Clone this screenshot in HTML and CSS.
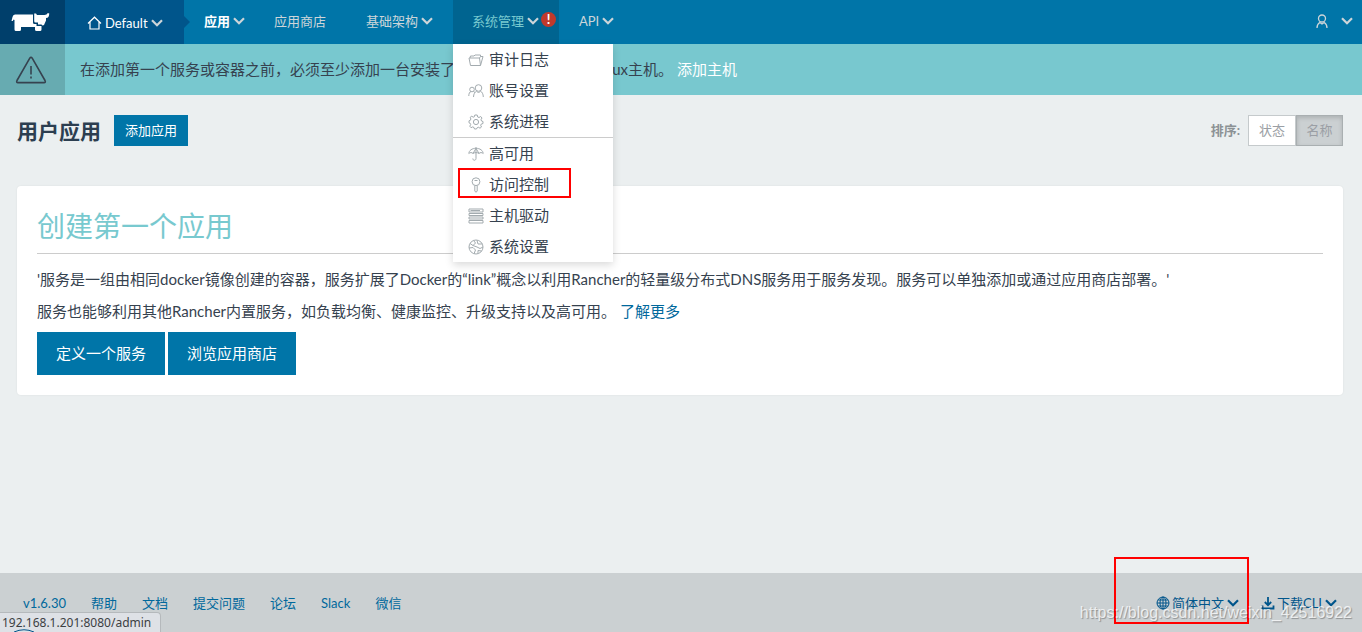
FILE: index.html
```html
<!DOCTYPE html>
<html lang="zh-CN">
<head>
<meta charset="utf-8">
<title>用户应用</title>
<link rel="stylesheet" href="styles.css">
</head>
<body>
<svg class="defs" aria-hidden="true">
  <symbol id="chevron" viewBox="0 0 12 8"><path d="M1 1.200 6 6.200 11 1.200" fill="none" stroke="currentColor" stroke-width="2.200"/></symbol>
</svg>
<header class="topbar">
  <a class="logo" href="#" aria-label="Rancher">
    <svg width="39" height="20" viewBox="0 0 39 20" fill="currentColor"><path d="M4 2.500H22V10.500Q22 12 23.500 12H25.500V14H30.500V17.500Q30.500 19 29 19H25.500Q24 19 24 17.500V15H10V17.500Q10 19 8.500 19H5Q3.500 19 3.500 17.500V8L2.500 7.500 1.800 9H.5L1.500 5Q2 2.500 4 2.500Z"/><path d="M23.200 1.500H25L26 3H33.500Q36 3 36.500 1.200H38.200Q38.500 6 35 6V8.500L33 13Q31.500 14 30.500 12.500H27V10.500H24.500Q23.200 10.500 23.200 9Z"/></svg>
  </a>
  <button class="env" type="button">
    <svg width="15" height="14" viewBox="0 0 15 14" fill="none" stroke="currentColor" stroke-width="1.200"><path d="M1 7.500 7.500 1.200 14 7.500M3 6V13H12V6"/></svg>
    <span>Default</span><svg class="chev"><use href="#chevron"/></svg>
  </button>
  <nav class="nav">
    <a class="item current" href="#">应用<svg class="chev"><use href="#chevron"/></svg></a>
    <a class="item store" href="#">应用商店</a>
    <a class="item infra" href="#">基础架构<svg class="chev"><use href="#chevron"/></svg></a>
    <div class="admin">
      <a class="item open" href="#">系统管理<svg class="chev"><use href="#chevron"/></svg><span class="alert">!</span></a>
      <ul class="menu">
        <li><a href="#"><svg class="mi" viewBox="0 0 16 16"><path d="M2.500 13.500H12.500L15 4.500H12.500L11.500 6M2.500 13.500 1 6H11.500L12.500 13.500M2 6 2.500 4H6L7 3H12.500V4.500"/></svg>审计日志</a></li>
        <li><a href="#"><svg class="mi" viewBox="0 0 16 16"><circle cx="10.500" cy="5" r="3.300"/><circle cx="4" cy="6.500" r="2.300"/><path d="M5.500 14C5.500 11 7 9 8.500 8M12.500 8C14 9 15.300 11 15.300 14M.8 13C.8 10.500 1.500 9 3 8.500M5.500 8.500 7 9.500M8.500 8 10.500 10 12.500 8"/></svg>账号设置</a></li>
        <li><a href="#"><svg class="mi" viewBox="0 0 16 16"><path d="M6.800 1H9.200L9.700 3 11 3.500 12.700 2.500 14 4 13 5.700 13.500 7 15 7.500V9.500L13.300 10 12.700 11.300 13.500 13 12 14.200 10.300 13.200 9.200 13.700 8.500 15H6.500L6 13.500 4.700 12.900 3 13.700 1.800 12.200 2.700 10.500 2.200 9.300 1 8.800V6.800L2.300 6.300 2.900 5 2.200 3.300 3.800 2.200 5.200 3.200 6.300 2.800Z"/><circle cx="8" cy="8" r="2.600"/></svg>系统进程</a></li>
        <li class="divided"><a href="#"><svg class="mi" viewBox="0 0 16 16"><path d="M.8 7.500C1 4.500 4 2.300 8 2.300S15 4.500 15.200 7.500C14 6.300 12 6.300 11 7.500 10 6.300 6 6.300 5 7.500 4 6.300 2 6.300.8 7.500ZM8 1V12.500C8 14.800 4.800 14.800 4.800 12.500M5 7.500 8 2.300 11 7.500"/></svg>高可用</a></li>
        <li class="marked"><a href="#"><svg class="mi" viewBox="0 0 16 16"><circle cx="8" cy="4.700" r="3.900"/><path d="M6.800 8.500V14L8 15.300 9.200 14V8.500M6.500 3.500H9.500"/></svg>访问控制</a></li>
        <li><a href="#"><svg class="mi" viewBox="0 0 16 16"><path d="M1 1H15V4H1ZM1 5.500H15V7.500H1ZM1 9H15V11H1ZM1 12.500H15V15H1ZM2.500 2.500H12"/></svg>主机驱动</a></li>
        <li><a href="#"><svg class="mi" viewBox="0 0 16 16"><circle cx="8" cy="8" r="7"/><path d="M2 4.500 5 6.500 7.500 4 5.500 1.500M1 9 5 8.500 7.500 11 6 14.800M9 1.500 10 5 14.500 5M9 8 12 9.500 15 8M10 14.500 10 11.500 13.500 12M5 6.500 9 8"/></svg>系统设置</a></li>
      </ul>
    </div>
    <a class="item api" href="#">API<svg class="chev"><use href="#chevron"/></svg></a>
  </nav>
  <button class="user" type="button" aria-label="用户">
    <svg width="12" height="15" viewBox="0 0 12 15" fill="none" stroke="currentColor" stroke-width="1.300"><circle cx="6" cy="4.500" r="3.500"/><path d="M1 14C1 11 2 9.500 3.800 8.500L6 10 8.200 8.500C10 9.500 11 11 11 14"/></svg>
    <svg class="chev"><use href="#chevron"/></svg>
  </button>
</header>
<div class="banner">
  <div class="warn"><svg width="32" height="28" viewBox="0 0 32 28" fill="none" stroke="currentColor" stroke-width="1.600" stroke-linejoin="round"><path d="M14.800 2.200Q16 .3 17.200 2.200L30 24.500Q31 26.600 29 26.600H3Q1 26.600 2 24.500ZM16 10V18.500M16 20.500V22.500"/></svg></div>
  <p>在添加第一个服务或容器之前，必须至少添加一台安装了 支持版本 Docker 的 Linux主机。 <a href="#">添加主机</a></p>
</div>
<main>
  <div class="head">
    <h1>用户应用</h1>
    <button class="btn small" type="button">添加应用</button>
    <div class="sort"><span>排序:</span><div class="group"><button type="button">状态</button><button class="active" type="button">名称</button></div></div>
  </div>
  <section class="card">
    <h2>创建第一个应用</h2>
    <p>'服务是一组由相同docker镜像创建的容器，服务扩展了Docker的“link”概念以利用Rancher的轻量级分布式DNS服务用于服务发现。服务可以单独添加或通过应用商店部署。'</p>
    <p>服务也能够利用其他Rancher内置服务，如负载均衡、健康监控、升级支持以及高可用。 <a href="#">了解更多</a></p>
    <div class="actions"><button class="btn" type="button">定义一个服务</button><button class="btn" type="button">浏览应用商店</button></div>
  </section>
</main>
<footer>
  <nav class="links"><a href="#">v1.6.30</a><a href="#">帮助</a><a href="#">文档</a><a href="#">提交问题</a><a href="#">论坛</a><a href="#">Slack</a><a href="#">微信</a></nav>
  <div class="tools">
    <button class="lang" type="button"><svg width="14" height="14" viewBox="0 0 14 14" fill="none" stroke="currentColor"><circle cx="7" cy="7" r="6"/><ellipse cx="7" cy="7" rx="3" ry="6"/><path d="M7 1V13M1 7H13M2 4H12M2 10H12"/></svg>简体中文<svg class="chev"><use href="#chevron"/></svg></button>
    <button type="button"><svg width="14" height="14" viewBox="0 0 14 14" fill="none" stroke="currentColor" stroke-width="1.800"><path d="M7 1V9M3.800 6 7 9.200 10.200 6M1.500 9.500V12.500H12.500V9.500"/></svg>下载CLI<svg class="chev"><use href="#chevron"/></svg></button>
  </div>
</footer>
<div class="status">192.168.1.201:8080/admin<svg class="arc" width="22" height="3" viewBox="0 0 22 3" fill="none" stroke="#00558b"><path d="M1 3Q11-1.500 21 3"/></svg></div>
<div class="watermark">https://blog.csdn.net/weixin_42516922</div>
</body>
</html>
```
FILE: styles.css
```css
*, *::before, *::after { box-sizing: border-box; }
body { margin: 0; min-height: 100vh; display: flex; flex-direction: column; overflow: hidden; background: #ebeff0; color: #36424f; font: 15px/22px Lato, "Noto Sans CJK SC", sans-serif; }
a { color: #00689c; text-decoration: none; }
button { font: inherit; border: 0; padding: 0; background: none; color: inherit; cursor: pointer; }
h1, h2, p, ul { margin: 0; padding: 0; }
ul { list-style: none; }
.defs { position: absolute; width: 0; height: 0; }
.chev { width: 12px; height: 8px; margin-left: 3px; flex: none; color: #cdd5d9; }
.topbar { display: flex; height: 44px; background: #0075a8; color: #fff; }
.logo { width: 65px; background: #003f6b; color: #fff; padding: 12px 0 0 11px; }
.env { position: relative; width: 119px; display: flex; align-items: center; padding: 2px 0 0 22px; background: #00558b; font-size: 13px; }
.env span { margin-left: 3px; }
.env::after { content: ""; position: absolute; left: 100%; top: 16px; border: 6px solid transparent; border-left-color: #00558b; border-right: 0; }
.nav { display: flex; flex: 1; padding-left: 20px; font-size: 13px; }
.item { display: flex; align-items: center; height: 44px; padding-bottom: 2px; color: #cdd5d9; }
.current { width: 70px; color: #fff; font-weight: bold; }
.store { width: 92px; }
.infra { width: 87px; }
.admin { position: relative; }
.open { width: 106px; padding-left: 19px; background: #006490; color: #78c9cf; }
.alert { width: 15px; height: 15px; margin: 0 0 4px 2px; border-radius: 50%; background: #c0392b; color: #fff; font: bold 13px/15px Lato, sans-serif; text-align: center; }
.api { padding-left: 20px; }
.menu { position: absolute; z-index: 2; left: 0; top: 44px; width: 160px; background: #fff; box-shadow: 0 3px 8px rgba(0,0,0,.15); font-size: 15px; }
.menu a { display: flex; align-items: center; gap: 5px; height: 31px; padding: 0 0 2px 15px; color: #36424f; }
.mi { width: 16px; height: 16px; margin-top: 3px; fill: none; stroke: #a3abaf; }
.divided { border-top: 1px solid #ccc; }
.marked { position: relative; }
.marked::after { content: ""; position: absolute; left: 5px; top: -1px; width: 113px; height: 30px; border: 2px solid #f00; }
.user { display: flex; align-items: center; gap: 10px; padding: 0 9px 2px 0; color: #cdd5d9; }
.banner { display: flex; height: 51px; background: #78c8cf; align-items: center; }
.warn { width: 65px; align-self: stretch; padding: 12px 0 0 15px; background: #67abb1; }
.banner p { padding: 0 0 2px 15px; }
.banner a { color: #fff; }
main { flex: 1; padding: 20px 19px 20px 17px; }
.head { display: flex; align-items: center; height: 31px; }
h1 { font-size: 21px; line-height: 31px; color: #2c3e50; }
.btn { height: 43px; width: 128px; padding-bottom: 2px; background: #0075a8; color: #fff; }
.small { height: 31px; width: 74px; margin-left: 13px; font-size: 13px; }
.sort { margin-left: auto; display: flex; align-items: center; gap: 8px; font-size: 13px; font-weight: bold; color: #8c9295; }
.sort span { padding-bottom: 2px; }
.group { display: flex; }
.group button { width: 48px; height: 31px; padding-bottom: 2px; border: 1px solid #c5cacc; background: #fff; font-weight: normal; color: #9b9fa5; }
.group .active { width: 47px; background: #cbd0d2; border-color: #a9afb1; box-shadow: inset 0 2px 4px rgba(0,0,0,.15); }
.card { margin-top: 40px; padding: 20px; background: #fff; border-radius: 4px; box-shadow: 0 0 2px rgba(0,0,0,.08); }
h2 { height: 48px; margin-bottom: 14px; border-bottom: 1px solid #ccc; font-size: 28px; line-height: 40px; font-weight: normal; color: #78c9cf; }
.card p { margin-bottom: 10px; }
.actions { display: flex; gap: 3px; }
footer { display: flex; justify-content: space-between; height: 59px; padding: 19px 25px 0 23px; background: #cbd0d2; font-size: 13px; color: #00558b; }
.links { display: flex; gap: 25px; }
.tools { display: flex; gap: 22px; align-items: flex-start; }
.tools button { display: flex; align-items: center; gap: 2px; }
.tools .chev { margin-left: 1px; color: inherit; }
.status { position: absolute; z-index: 3; left: 0; bottom: 0; height: 20px; width: 161px; padding-left: 2px; background: #dee1e6; border: 1px solid #b5b9bc; border-width: 1px 1px 0 0; border-top-right-radius: 4px; font: 12px/20px "Noto Sans", sans-serif; color: #3c4043; }
.arc { position: absolute; left: 13px; bottom: 0; }
.watermark { position: absolute; z-index: 3; right: 10px; bottom: 8px; font: 16px/22px "Liberation Sans", sans-serif; color: rgba(255,255,255,.75); text-shadow: 1px 1px 1px rgba(0,0,0,.3); }
.lang { position: relative; }
.lang::after { content: ""; position: absolute; left: -42px; top: -35px; width: 135px; height: 67px; border: 2px solid #f00; }
```
